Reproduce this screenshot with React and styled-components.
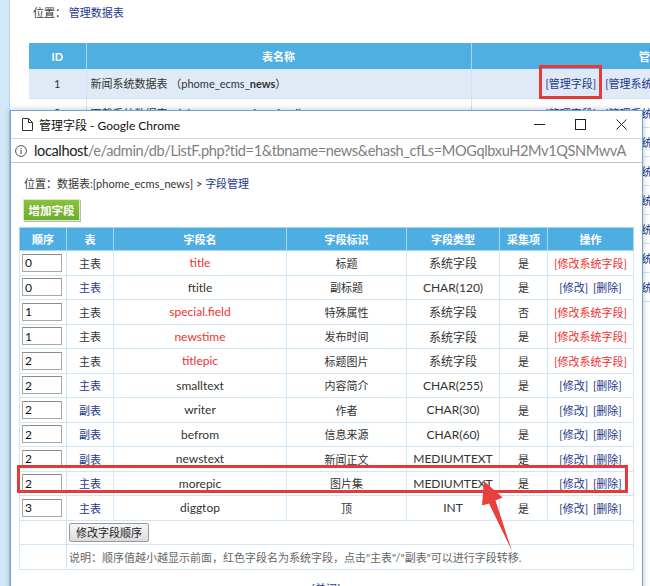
import React from 'react';
import styled, { createGlobalStyle } from 'styled-components';

const FONT = `Lato, "Noto Sans CJK SC", sans-serif`;

const GlobalStyle = createGlobalStyle`
  html, body { margin: 0; padding: 0; width: 650px; height: 586px; overflow: hidden; background: #fff; }
  #root { width: 650px; height: 586px; position: relative; overflow: hidden; }
  * { box-sizing: border-box; }
`;

/* ---------- background admin page ---------- */
const Page = styled.div`
  display: flex;
  width: 650px;
  height: 586px;
  font-family: ${FONT};
  font-size: 11px;
  color: #333;
`;
const SideStrip = styled.div`
  width: 10px;
  flex: none;
  background: #d2e7f8;
  border-right: 1px solid #b2d4ef;
`;
const Main = styled.div`
  flex: 1;
  padding: 4px 0 0 19px;
  overflow: hidden;
`;
const Crumb = styled.div`
  line-height: 18px;
  padding-left: ${p => p.$indent || 0}px;
  color: #333;
  font-size: 11px;
`;
const Link = styled.a`
  color: ${p => (p.$red ? '#f03030' : '#23398c')};
  text-decoration: none;
`;
const BgTable = styled.table`
  margin-top: 21px;
  width: 800px;
  border-collapse: collapse;
  table-layout: fixed;
`;
const BgHead = styled.th`
  height: 26px;
  background: #4fafe1;
  color: #fff;
  font-weight: bold;
  font-size: 11px;
  border-right: 1px solid #a9d7f1;
  text-align: center;
  padding: 0;
`;
const BgCell = styled.td`
  height: 29px;
  padding: 0 0 0 ${p => p.$pad || 0}px;
  text-align: ${p => p.$align || 'left'};
  background: ${p => (p.$alt ? '#dfeaf6' : '#fff')};
  border-right: 1px solid #cfe3f3;
  border-bottom: 1px solid #cfe3f3;
  white-space: nowrap;
  font-size: 11px;
`;
const OpLink = styled.a`
  color: #23398c;
  text-decoration: none;
  margin-right: 9px;
  position: relative;
`;
const MarkBox = styled.span`
  position: absolute;
  left: -7px;
  right: -6px;
  top: -12px;
  bottom: -9px;
  border: 3px solid #e53a3a;
  pointer-events: none;
`;

/* ---------- chrome popup window ---------- */
const Window = styled.div`
  position: absolute;
  left: 10px;
  top: 110px;
  width: 633px;
  height: 500px;
  border: 1px solid #6aa8dc;
  background: #fff;
  box-shadow: 0 0 6px rgba(0, 0, 0, 0.25);
  font-family: ${FONT};
  overflow: hidden;
`;
const TitleBar = styled.div`
  height: 27px;
  display: flex;
  align-items: center;
  padding-left: 11px;
  background: #fff;
`;
const TitleText = styled.div`
  margin-left: 6px;
  font-size: 12px;
  color: #111;
  flex: 1;
  white-space: nowrap;
`;
const Ctrl = styled.div`
  width: 41px;
  height: 27px;
  flex: none;
  display: flex;
  align-items: center;
  justify-content: center;
`;
const AddressBar = styled.div`
  height: 25px;
  display: flex;
  align-items: center;
  padding-left: 4px;
  border-top: 1px solid #d6d6d6;
  border-bottom: 1px solid #c4c4c4;
  background: #fff;
  & > svg { flex: none; }
`;
const Url = styled.div`
  margin-left: 7px;
  font-size: 14.6px;
  letter-spacing: -0.4px;
  color: #808080;
  white-space: nowrap;
  & b { font-weight: normal; color: #222; }
`;
const Content = styled.div`
  position: relative;
  padding: 12px 9px 0 8px;
  font-size: 11px;
  color: #333;
`;
const AddButton = styled.button`
  display: block;
  margin: 6px 0 0 4px;
  width: 57px;
  height: 22px;
  padding: 0;
  border: 1px solid #d8eac3;
  background: linear-gradient(#86c23f, #6eae2c);
  box-shadow: 1px 1px 0 #b9b9b9;
  color: #fff;
  font-family: ${FONT};
  font-size: 11.5px;
  font-weight: bold;
`;
const FieldTable = styled.table`
  margin-top: 6px;
  width: 614px;
  border-collapse: collapse;
  table-layout: fixed;
  border: 1px solid #6fbce8;
`;
const Th = styled.th`
  height: 23px;
  background: #4eaee2;
  color: #fff;
  font-weight: bold;
  font-size: 11px;
  text-align: center;
  border: 1px solid #a6d7f2;
  padding: 0;
`;
const Td = styled.td`
  height: 24.5px;
  padding: 0 ${p => p.$pad ?? 2}px;
  text-align: ${p => p.$align || 'center'};
  border: 1px solid #cfe6f6;
  white-space: nowrap;
  font-size: ${p => (p.$latin ? 12 : 11)}px;
  color: ${p => (p.$red ? '#f03030' : '#333')};
`;
const OpGap = styled.span`
  display: inline-block;
  width: 5px;
`;
const OrderInput = styled.input`
  display: block;
  width: 40px;
  height: 18px;
  border: 1px solid #a8a8a8;
  border-top-color: #8c8c8c;
  padding: 0 0 0 2px;
  font-family: ${FONT};
  font-size: 12px;
  color: #111;
  background: #fff;
`;
const GrayButton = styled.button`
  height: 19px;
  padding: 0 6px;
  border: 1px solid #9a9a9a;
  border-radius: 2px;
  background: linear-gradient(#f6f6f6, #dcdcdc);
  font-family: ${FONT};
  font-size: 11px;
  color: #222;
  line-height: 17px;
`;
const Note = styled.span`
  color: #666;
`;
const CloseLine = styled.div`
  margin-top: 11px;
  text-align: center;
  width: 614px;
  color: #23398c;
  line-height: 16px;
`;
const Highlight = styled.div`
  position: absolute;
  left: 6px;
  top: 302px;
  width: 611px;
  height: 28px;
  border: 3px solid #e53a3a;
  pointer-events: none;
`;
const ArrowSvg = styled.svg`
  position: absolute;
  left: 0;
  top: 0;
  pointer-events: none;
`;

const DocIcon = () => (
  <svg width="11" height="13" viewBox="0 0 11 13" style={{ flex: 'none' }}>
    <path d="M0.5 0.5 H6.5 L10.5 4.5 V12.5 H0.5 Z M6.5 0.5 V4.5 H10.5" fill="none" stroke="#333" strokeWidth="1" />
  </svg>
);
const InfoIcon = () => (
  <svg width="12" height="12" viewBox="0 0 12 12">
    <circle cx="6" cy="6" r="5.4" fill="none" stroke="#555" strokeWidth="1" />
    <rect x="5.45" y="5" width="1.1" height="4" fill="#555" />
    <rect x="5.45" y="3" width="1.1" height="1.1" fill="#555" />
  </svg>
);

const fields = [
  ['0', '主表', false, 'title', true, '标题', '系统字段', '是'],
  ['0', '主表', true, 'ftitle', false, '副标题', 'CHAR(120)', '是'],
  ['1', '主表', false, 'special.field', true, '特殊属性', '系统字段', '否'],
  ['1', '主表', false, 'newstime', true, '发布时间', '系统字段', '是'],
  ['2', '主表', false, 'titlepic', true, '标题图片', '系统字段', '是'],
  ['2', '主表', true, 'smalltext', false, '内容简介', 'CHAR(255)', '是'],
  ['2', '副表', true, 'writer', false, '作者', 'CHAR(30)', '是'],
  ['2', '副表', true, 'befrom', false, '信息来源', 'CHAR(60)', '是'],
  ['2', '副表', true, 'newstext', false, '新闻正文', 'MEDIUMTEXT', '是'],
  ['2', '主表', true, 'morepic', false, '图片集', 'MEDIUMTEXT', '是'],
  ['3', '主表', true, 'diggtop', false, '顶', 'INT', '是'],
];

const bgRows = [
  ['1', '新闻系统数据表', 'news'],
  ['2', '下载系统数据表', 'download'],
  ['3', '图片系统数据表', 'photo'],
  ['4', 'FLASH系统数据表', 'flash'],
  ['5', '电影系统数据表', 'movie'],
  ['6', '商城系统数据表', 'shop'],
  ['7', '文章系统数据表', 'article'],
  ['8', '分类信息数据表', 'info'],
];

export default function App() {
  return (
    <>
      <GlobalStyle />
      <Page>
        <SideStrip />
        <Main>
          <Crumb $indent={4}>
            位置：&nbsp;<Link>管理数据表</Link>
          </Crumb>
          <BgTable>
            <colgroup>
              <col style={{ width: 57 }} />
              <col style={{ width: 385 }} />
              <col />
            </colgroup>
            <thead>
              <tr>
                <BgHead>ID</BgHead>
                <BgHead>表名称</BgHead>
                <BgHead>管理</BgHead>
              </tr>
            </thead>
            <tbody>
              {bgRows.map((r, i) => (
                <tr key={r[0]}>
                  <BgCell $align="center" $alt={i === 0}>{r[0]}</BgCell>
                  <BgCell $pad={4} $alt={i === 0}>
                    {r[1]} （phome_ecms_<b>{r[2]}</b>）
                  </BgCell>
                  <BgCell $pad={74} $alt={i === 0}>
                    <OpLink>
                      [管理字段]
                      {i === 0 && <MarkBox />}
                    </OpLink>
                    <OpLink>[管理系统模型]</OpLink>
                    <OpLink>[管理分表]</OpLink>
                  </BgCell>
                </tr>
              ))}
            </tbody>
          </BgTable>
        </Main>
      </Page>

      <Window>
        <TitleBar>
          <DocIcon />
          <TitleText>管理字段 - Google Chrome</TitleText>
          <Ctrl>
            <svg width="11" height="11" viewBox="0 0 11 11">
              <line x1="0" y1="5.5" x2="11" y2="5.5" stroke="#222" strokeWidth="1" />
            </svg>
          </Ctrl>
          <Ctrl>
            <svg width="11" height="11" viewBox="0 0 11 11">
              <rect x="0.5" y="0.5" width="10" height="10" fill="none" stroke="#222" strokeWidth="1" />
            </svg>
          </Ctrl>
          <Ctrl>
            <svg width="11" height="11" viewBox="0 0 11 11">
              <path d="M0.5 0.5 L10.5 10.5 M10.5 0.5 L0.5 10.5" stroke="#222" strokeWidth="1" />
            </svg>
          </Ctrl>
        </TitleBar>
        <AddressBar>
          <InfoIcon />
          <Url>
            <b>localhost</b>/e/admin/db/ListF.php?tid=1&amp;tbname=news&amp;ehash_cfLs=MOGqlbxuH2Mv1QSNMwvA
          </Url>
        </AddressBar>
        <Content>
          <Crumb $indent={5}>
            位置：数据表:[phome_ecms_news] &gt; <Link>字段管理</Link>
          </Crumb>
          <AddButton>增加字段</AddButton>
          <FieldTable>
            <colgroup>
              <col style={{ width: 47 }} />
              <col style={{ width: 47 }} />
              <col style={{ width: 173 }} />
              <col style={{ width: 120 }} />
              <col style={{ width: 93 }} />
              <col style={{ width: 48 }} />
              <col style={{ width: 86 }} />
            </colgroup>
            <thead>
              <tr>
                <Th>顺序</Th>
                <Th>表</Th>
                <Th>字段名</Th>
                <Th>字段标识</Th>
                <Th>字段类型</Th>
                <Th>采集项</Th>
                <Th>操作</Th>
              </tr>
            </thead>
            <tbody>
              {fields.map((f, i) => (
                <tr key={i}>
                  <Td $align="left">
                    <OrderInput defaultValue={f[0]} />
                  </Td>
                  <Td>{f[2] ? <Link>{f[1]}</Link> : f[1]}</Td>
                  <Td $latin $red={f[4]}>{f[3]}</Td>
                  <Td>{f[5]}</Td>
                  <Td $latin>{f[6]}</Td>
                  <Td>{f[7]}</Td>
                  <Td $pad={0}>
                    {f[4] ? (
                      <Link $red>[修改系统字段]</Link>
                    ) : (
                      <>
                        <Link>[修改]</Link>
                        <OpGap />
                        <Link>[删除]</Link>
                      </>
                    )}
                  </Td>
                </tr>
              ))}
              <tr>
                <Td />
                <Td $align="left" colSpan={6}>
                  <GrayButton>修改字段顺序</GrayButton>
                </Td>
              </tr>
              <tr>
                <Td />
                <Td $align="left" colSpan={6}>
                  <Note>说明：顺序值越小越显示前面，红色字段名为系统字段，点击"主表"/"副表"可以进行字段转移.</Note>
                </Td>
              </tr>
            </tbody>
          </FieldTable>
          <CloseLine>[关闭]</CloseLine>
          <Highlight />
          <ArrowSvg width="620" height="420" viewBox="0 0 620 420">
            <polygon
              points="473,318 491.5,334.5 484.5,337.5 501,388 478,340.5 471,342.5"
              fill="#e8403a"
            />
          </ArrowSvg>
        </Content>
      </Window>
    </>
  );
}
